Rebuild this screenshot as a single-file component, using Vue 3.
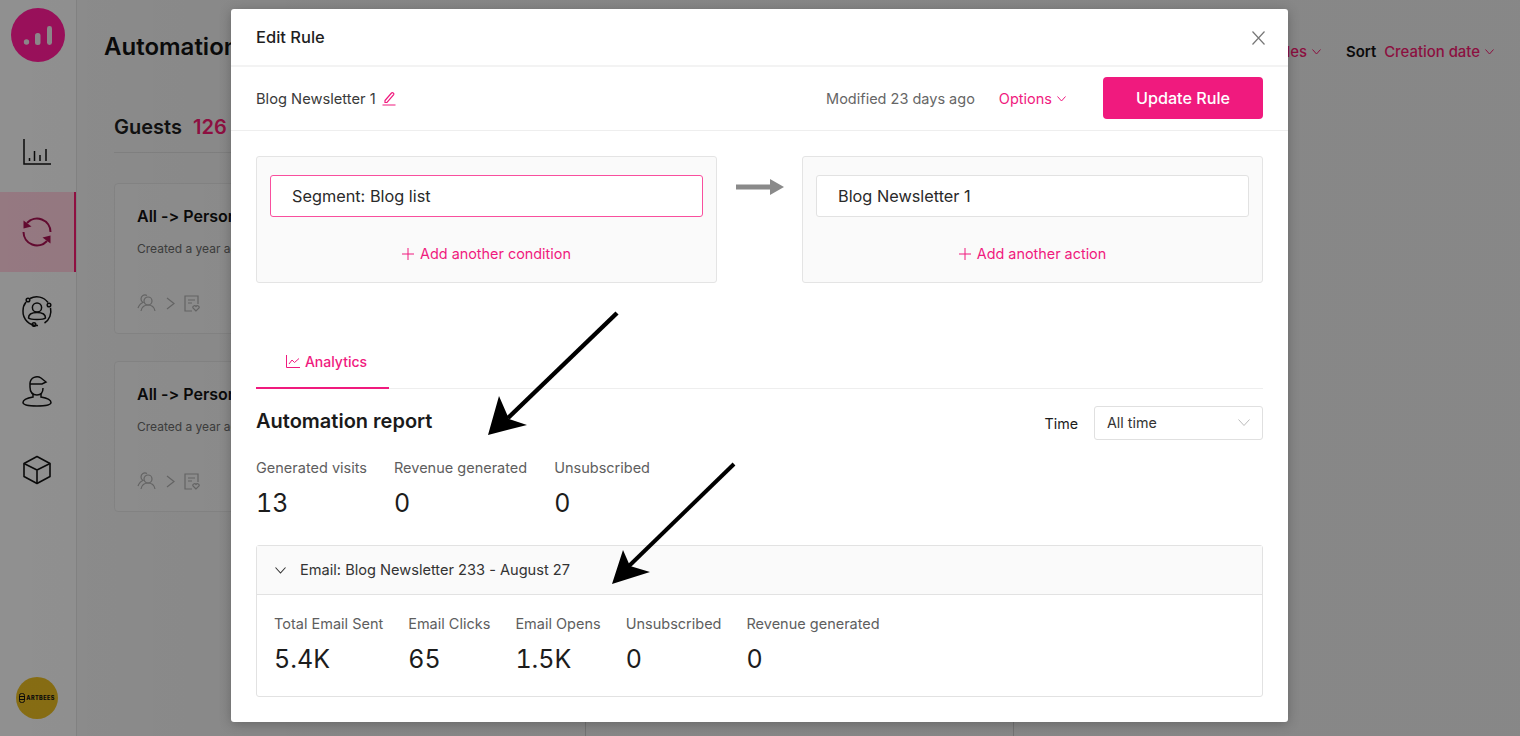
<script setup>
const navIcons = ['chart', 'sync', 'users', 'agent', 'box']
const reportStats = [
  { label: 'Generated visits', value: '13' },
  { label: 'Revenue generated', value: '0' },
  { label: 'Unsubscribed', value: '0' },
]
const emailStats = [
  { label: 'Total Email Sent', value: '5.4K' },
  { label: 'Email Clicks', value: '65' },
  { label: 'Email Opens', value: '1.5K' },
  { label: 'Unsubscribed', value: '0' },
  { label: 'Revenue generated', value: '0' },
]
const guestCards = [1, 2]
</script>

<template>
  <div class="page">
    <aside class="sidebar">
      <div class="logo">
        <svg width="30" height="30" viewBox="0 0 30 30">
          <circle cx="3.500" cy="22" r="2.700" fill="#e9e0e5" />
          <rect x="12" y="13" width="5.500" height="12" rx="2.500" fill="#e9e0e5" />
          <rect x="24" y="6" width="5" height="19" rx="2.400" fill="#e9e0e5" />
        </svg>
      </div>
      <nav class="nav">
        <div v-for="icon in navIcons" :key="icon" class="nav-item" :class="{ active: icon === 'sync' }">
          <svg v-if="icon === 'chart'" width="30" height="30" viewBox="0 0 30 30" fill="none" stroke="#111" stroke-width="1.500">
            <path d="M2 2v25h27" />
            <path d="M7.500 24v-3M12.500 24v-10M18 24v-6M24 24v-12" />
          </svg>
          <svg v-else-if="icon === 'sync'" width="32" height="32" viewBox="0 0 32 32" fill="none" stroke="#a3104f" stroke-width="2">
            <path d="M6 7A13.500 13.500 0 0 1 29.500 16" />
            <path d="M26 25A13.500 13.500 0 0 1 2.500 16" />
            <path d="M2.500 4.500 10.500 10.500 2.500 12.500z" fill="#a3104f" stroke="none" />
            <path d="M29.500 27.500 21.500 21.500 29.500 19.500z" fill="#a3104f" stroke="none" />
          </svg>
          <svg v-else-if="icon === 'users'" width="32" height="32" viewBox="0 0 32 32" fill="none" stroke="#111" stroke-width="1.500">
            <path d="M9 3.500a14 14 0 0 1 18 4M29.500 13a14 14 0 0 1-6 15M17 30.500A14 14 0 0 1 2 16 14 14 0 0 1 5 7" />
            <circle cx="7" cy="5" r="1.800" />
            <circle cx="28" cy="10" r="1.800" />
            <circle cx="13" cy="29.500" r="1.800" />
            <circle cx="16" cy="12.500" r="4.600" />
            <path d="M7.500 23c0-4 3-5.500 8.500-5.500s8.500 1.500 8.500 5.500c-2 2-15 2-17 0z" />
          </svg>
          <svg v-else-if="icon === 'agent'" width="32" height="32" viewBox="0 0 32 32" fill="none" stroke="#111" stroke-width="1.500">
            <path d="M9 12V8a7 7 0 0 1 11-5l5 4-4 2H9" />
            <path d="M9 12c0 6 3 8 7 8s6-3 6-7" />
            <path d="M12 19v3c-6 1-10 3-10 5.500 0 2.500 6 3.500 14 3.500s14-1 14-3.500c0-2.500-4-4.500-10-5.500v-3" />
          </svg>
          <svg v-else width="30" height="30" viewBox="0 0 30 30" fill="none" stroke="#111" stroke-width="1.600" stroke-linejoin="round">
            <path d="M15 1.500 28 8.500v13l-13 7-13-7v-13z" />
            <path d="M2 8.500 15 15l13-6.500M15 15v13.500" />
          </svg>
        </div>
      </nav>
      <div class="brand">
        <svg width="6" height="10" viewBox="0 0 6 10" fill="none" stroke="#111"><rect x=".5" y=".5" width="5" height="9" rx="2" /><path d="M1 3.500h4M1 6.500h4" /></svg>
        <span class="brand-text">ARTBEES</span>
      </div>
    </aside>

    <main class="main">
      <header class="main-head">
        <h1>Automations</h1>
        <div class="filters">
          <span class="accent">Rules</span>
          <svg class="mini" width="9" height="6" viewBox="0 0 9 6" fill="none" stroke="#f01a6e"><path d="M.5.500 4.500 5l4-4.500" /></svg>
          <span class="sort">Sort</span>
          <span class="accent">Creation date</span>
          <svg class="mini" width="9" height="6" viewBox="0 0 9 6" fill="none" stroke="#f01a6e"><path d="M.5.500 4.500 5l4-4.500" /></svg>
        </div>
      </header>
      <div class="columns">
        <section class="guests">
          <h2>Guests <b>126</b></h2>
          <article v-for="card in guestCards" :key="card" class="guest-card">
            <h3>All -&gt; Personal offer</h3>
            <p>Created a year ago</p>
            <div class="flow">
              <svg width="20" height="18" viewBox="0 0 20 18" fill="none" stroke="#a8a8a8" stroke-width="1.200">
                <circle cx="11" cy="7" r="4" /><path d="M4 17c1-5 4-6 7-6s6 1 7 6M10 1.500C7 0 4 2 4 5c0 2 1 3 2 3.500-3 1-4 3-5 5.500" />
              </svg>
              <svg width="9" height="13" viewBox="0 0 9 13" fill="none" stroke="#a8a8a8" stroke-width="1.200"><path d="M1 1l7 5.500L1 12" /></svg>
              <svg width="16" height="17" viewBox="0 0 16 17" fill="none" stroke="#a8a8a8" stroke-width="1.200">
                <path d="M8 16H1V1h13v8M4 5h7M4 8h4" /><path d="M12 16l-3-3c-1-2 2-3 3-1.500 1-1.500 4-.5 3 1.500z" />
              </svg>
            </div>
          </article>
        </section>
        <section class="middle"></section>
        <section class="right"></section>
      </div>
    </main>

    <div class="scrim"></div>

    <div class="modal">
      <header class="modal-head">
        <span class="modal-title">Edit Rule</span>
        <svg width="13" height="14" viewBox="0 0 13 14" stroke="#777" stroke-width="1.200"><path d="M.5.500l12 13M12.500.500l-12 13" /></svg>
      </header>
      <div class="toolbar">
        <div class="rule-name">
          <span>Blog Newsletter 1</span>
          <svg width="14" height="15" viewBox="0 0 14 15" fill="none" stroke="#f01a7e" stroke-width="1.200">
            <path d="M3 9.500 9.500 2c1-1 3 .5 2.200 1.700L5 11.500H3zM.5 14h13" />
          </svg>
        </div>
        <div class="tool-right">
          <span class="modified">Modified 23 days ago</span>
          <span class="options">Options
            <svg width="9" height="6" viewBox="0 0 9 6" fill="none" stroke="#f01a7e"><path d="M.5.500 4.500 5l4-4.500" /></svg>
          </span>
          <button class="update">Update Rule</button>
        </div>
      </div>

      <div class="modal-body">
        <div class="rule-row">
          <div class="rule-card">
            <div class="field focus">Segment: Blog list</div>
            <div class="add">
              <svg width="12" height="12" viewBox="0 0 12 12" stroke="#f01a7e"><path d="M6 0v12M0 6h12" /></svg>
              Add another condition
            </div>
          </div>
          <svg class="rule-arrow" width="48" height="16" viewBox="0 0 48 16"><path d="M0 5.500h34V0l14 8-14 8v-5.500H0z" fill="#8a8a8a" /></svg>
          <div class="rule-card">
            <div class="field">Blog Newsletter 1</div>
            <div class="add">
              <svg width="12" height="12" viewBox="0 0 12 12" stroke="#f01a7e"><path d="M6 0v12M0 6h12" /></svg>
              Add another action
            </div>
          </div>
        </div>

        <div class="tabs">
          <div class="tab">
            <svg width="14" height="13" viewBox="0 0 14 13" fill="none" stroke="#f01a7e"><path d="M.5 0v12.500H14M3 9l3-4 2.500 2.500L13 3.500" /></svg>
            Analytics
          </div>
        </div>

        <div class="report-head">
          <h2>Automation report</h2>
          <div class="time">
            <span>Time</span>
            <div class="select">All time
              <svg width="12" height="7" viewBox="0 0 12 7" fill="none" stroke="#bbb"><path d="M.5.500 6 6.500l5.500-6" /></svg>
            </div>
          </div>
        </div>

        <div class="stats report-stats">
          <div v-for="s in reportStats" :key="s.label" class="stat">
            <div class="stat-label">{{ s.label }}</div>
            <div class="stat-value">{{ s.value }}</div>
          </div>
        </div>

        <div class="panel">
          <div class="panel-head">
            <svg width="11" height="7" viewBox="0 0 11 7" fill="none" stroke="#333" stroke-width="1.100"><path d="M.5.500 5.500 6l5-5.500" /></svg>
            <span>Email: Blog Newsletter 233 - August 27</span>
          </div>
          <div class="stats email-stats">
            <div v-for="s in emailStats" :key="s.label" class="stat">
              <div class="stat-label">{{ s.label }}</div>
              <div class="stat-value">{{ s.value }}</div>
            </div>
          </div>
        </div>
      </div>
    </div>

    <svg class="annot" width="1520" height="736" viewBox="0 0 1520 736">
      <path d="M617 313 508 418" stroke="#000" stroke-width="4.500" fill="none" />
      <path d="M488 435 499 396 509 419 527 425z" fill="#000" />
      <path d="M734 464 629 566" stroke="#000" stroke-width="4" fill="none" />
      <path d="M612 584 623 550 630 566 650 572z" fill="#000" />
    </svg>
  </div>
</template>

<style>
html, body { margin: 0; height: 100%; overflow: hidden; }
</style>

<style scoped>
.page {
  position: relative;
  display: flex;
  width: 1520px;
  height: 736px;
  overflow: hidden;
  background: #e9e9e9;
  font-family: Inter, "Noto Sans", sans-serif;
  font-feature-settings: "liga" 0, "calt" 0;
  color: #1c1c1c;
}
.sidebar {
  position: relative;
  box-sizing: border-box;
  width: 77px;
  flex: none;
  display: flex;
  flex-direction: column;
  align-items: center;
  padding-top: 8px;
  background: #f0f0f0;
  border-right: 1px solid #d8d8d8;
}
.logo {
  width: 54px;
  height: 54px;
  border-radius: 50%;
  background: #ff1a96;
  display: flex;
  align-items: center;
  justify-content: center;
  flex: none;
}
.nav { margin-top: 50px; align-self: stretch; display: flex; flex-direction: column; }
.nav-item {
  height: 79.500px;
  display: flex;
  align-items: center;
  justify-content: center;
  box-sizing: border-box;
  border-right: 2px solid transparent;
}
.nav-item.active { background: #f8c9d7; border-right-color: #f01a6e; height: 80px; }
.brand {
  position: absolute;
  left: 16px;
  top: 677px;
  width: 42px;
  height: 42px;
  border-radius: 50%;
  background: #e0b520;
  display: flex;
  align-items: center;
  justify-content: center;
  gap: 1px;
}
.brand-text { font-size: 5.500px; font-weight: 800; color: #111; letter-spacing: .4px; }
.main { flex: 1; min-width: 0; display: flex; flex-direction: column; }
.main-head {
  display: flex;
  align-items: flex-start;
  justify-content: space-between;
  padding: 32px 26px 0 27px;
  height: 30px;
}
h1 { margin: 0; font-size: 24px; line-height: 30px; font-weight: 600; color: #111; }
.filters { display: flex; align-items: center; margin-top: 10px; height: 20px; font-size: 14.900px; font-weight: 500; }
.accent { color: #f01a6e; }
.mini { margin-left: 5px; }
.sort { margin: 0 8px 0 25px; color: #111; font-weight: 600; }
.columns { display: flex; flex: 1; margin-top: 0; }
.guests { box-sizing: border-box; width: 508px; padding: 51px 0 0 37px; }
.guests h2 {
  margin: 0 0 30px;
  padding-bottom: 11px;
  font-size: 20px;
  line-height: 28px;
  font-weight: 600;
  border-bottom: 1px solid #d6d6d6;
  color: #1c1c1c;
}
.guests h2 b { color: #f01a6e; font-weight: 600; margin-left: 6px; }
.guest-card {
  box-sizing: border-box;
  height: 151px;
  margin-bottom: 27px;
  padding: 22px 22px;
  background: #ececec;
  border: 1px solid #dcdcdc;
  border-radius: 4px;
}
.guest-card h3 { margin: 0; font-size: 16px; line-height: 20px; font-weight: 600; color: #111; }
.guest-card p { margin: 14px 0 0; font-size: 12px; line-height: 18px; color: #666; }
.flow { display: flex; align-items: center; gap: 9px; margin-top: 36px; }
.middle { width: 427px; border-left: 1px solid #c6c6c6; border-right: 1px solid #c6c6c6; flex: none; }
.right { flex: 1; }
.scrim {
  position: absolute;
  inset: 0;
  background: linear-gradient(90deg, rgba(0,0,0,.4), rgba(0,0,0,.42) 20%, rgba(0,0,0,.42));
}
.modal {
  position: absolute;
  left: 231px;
  top: 9px;
  width: 1057px;
  height: 713px;
  background: #fff;
  border-radius: 3px;
  box-shadow: 0 2px 12px rgba(0,0,0,.25);
}
.modal-head {
  box-sizing: border-box;
  height: 58px;
  padding: 2px 23px 0 25px;
  display: flex;
  align-items: center;
  justify-content: space-between;
  border-bottom: 2px solid #f3f3f3;
  font-size: 16.500px;
  font-weight: 500;
  color: #1f1f1f;
}
.modal-title { margin-bottom: 2px; }
.toolbar {
  box-sizing: border-box;
  height: 64px;
  padding: 0 25px;
  display: flex;
  align-items: center;
  justify-content: space-between;
  border-bottom: 1px solid #eeeeee;
}
.rule-name { display: flex; align-items: center; gap: 6px; font-size: 14.700px; color: #3a3a3a; }
.tool-right { display: flex; align-items: center; font-size: 14.500px; }
.modified { color: #666; }
.options { color: #f01a7e; margin-left: 24px; display: flex; align-items: center; gap: 5px; }
.update {
  margin: 0 0 2px 37px;
  width: 160px;
  height: 42px;
  border: 0;
  border-radius: 4px;
  background: #f01a7e;
  color: #fff;
  font: 500 16.200px Inter, sans-serif;
}
.modal-body { padding: 25px 25px 0; }
.rule-row { display: flex; align-items: flex-start; justify-content: space-between; height: 127px; }
.rule-card {
  box-sizing: border-box;
  width: 461px;
  height: 127px;
  padding: 18px 13px 0;
  background: #fafafa;
  border: 1px solid #e4e4e4;
  border-radius: 3px;
}
.rule-arrow { margin-top: 23px; }
.field {
  box-sizing: border-box;
  height: 42px;
  padding: 0 21px;
  display: flex;
  align-items: center;
  background: #fff;
  border: 1px solid #e2e2e2;
  border-radius: 3px;
  font-size: 16.300px;
  color: #2a2a2a;
}
.field.focus { border: 1.500px solid #f94f9e; }
.add {
  margin-top: 28px;
  display: flex;
  align-items: center;
  justify-content: center;
  gap: 6px;
  color: #f01a7e;
  font-size: 14.400px;
  line-height: 18px;
}
.tabs { margin-top: 54px; border-bottom: 1px solid #eeeeee; height: 51px; }
.tab {
  box-sizing: border-box;
  width: 133px;
  height: 52px;
  display: flex;
  align-items: center;
  justify-content: center;
  gap: 5px;
  padding: 0 0 1px 8px;
  border-bottom: 2px solid #f01a7e;
  color: #f01a7e;
  font-size: 14px;
  font-weight: 500;
}
.report-head {
  display: flex;
  align-items: flex-start;
  justify-content: space-between;
  margin-top: 17px;
  height: 34px;
}
.report-head h2 { margin: 0; font-size: 20px; line-height: 30px; font-weight: 600; color: #1a1a1a; }
.time { display: flex; align-items: center; gap: 16px; font-size: 14.300px; }
.select {
  box-sizing: border-box;
  width: 169px;
  height: 34px;
  padding: 0 12px 1px;
  display: flex;
  align-items: center;
  justify-content: space-between;
  border: 1px solid #e0e0e0;
  border-radius: 3px;
  color: #333;
}
.stats { display: flex; }
.report-stats { margin-top: 19px; gap: 27px; }
.stat-label { font-size: 14.500px; line-height: 18px; color: #5e5e5e; }
.stat-value {
  font-size: 25px;
  line-height: 32px;
  margin-top: 10px;
  color: #1c1c1c;
  font-variant-numeric: tabular-nums;
  font-feature-settings: "liga" 0, "calt" 0, "tnum" 1;
}
.panel {
  margin-top: 26px;
  box-sizing: border-box;
  height: 152px;
  border: 1px solid #e2e2e2;
  border-radius: 3px;
}
.panel-head {
  box-sizing: border-box;
  height: 49px;
  padding: 0 18px;
  display: flex;
  align-items: center;
  gap: 14px;
  background: #fafafa;
  border-bottom: 1px solid #e2e2e2;
  font-size: 14.600px;
  color: #333;
}
.email-stats { padding: 20px 17px 0; gap: 25px; }
.annot { position: absolute; inset: 0; pointer-events: none; }
</style>
